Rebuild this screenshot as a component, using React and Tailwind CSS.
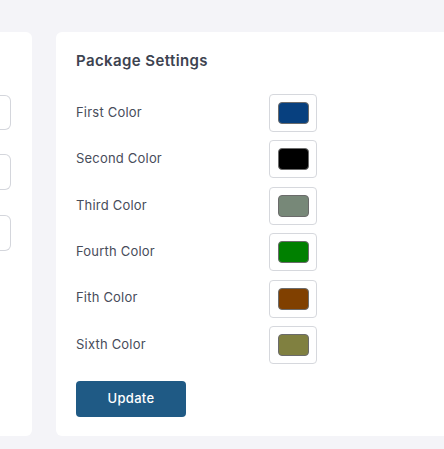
import React from "react";

const colors = [
  { label: "First Color", value: "#07407f" },
  { label: "Second Color", value: "#000000" },
  { label: "Third Color", value: "#778878" },
  { label: "Fourth Color", value: "#008000" },
  { label: "Fith Color", value: "#804000" },
  { label: "Sixth Color", value: "#808040" },
];

function App() {
  return (
    <div
      className="w-[444px] h-[449px] overflow-hidden bg-[#f4f4f8] pt-8"
      style={{ fontFamily: "Inter, 'Open Sans', sans-serif" }}
    >
      <div className="flex gap-6 h-[404px]">
        <div className="w-8 shrink-0 bg-white rounded-r-md pr-[21px] pt-[63px] flex flex-col">
          <div className="h-[35px] border border-[#d4d6dc] border-l-0 rounded-r-md" />
          <div className="h-[36px] mt-[24px] border border-[#d4d6dc] border-l-0 rounded-r-md" />
          <div className="h-[36px] mt-[25px] border border-[#d4d6dc] border-l-0 rounded-r-md" />
        </div>
        <div className="w-[460px] shrink-0 bg-white rounded-md px-5 pt-[19px]">
          <h2 className="text-[15px] font-semibold text-[#3d4350] leading-5 tracking-[0.4px]">Package Settings</h2>
          <div className="mt-[23px] flex flex-col gap-[8.4px]">
            {colors.map((c) => (
              <div key={c.label} className="flex items-center h-[38px]">
                <span className="w-[193px] text-[13px] text-[#474c5a] -mt-px tracking-[0.2px]">{c.label}</span>
                <div className="w-[48px] h-[38px] border border-[#d6d8dd] rounded-[4px] flex items-center justify-center">
                  <div
                    className="w-[31px] h-[22px] rounded-[4px] border border-[#6b6b6b]"
                    style={{ backgroundColor: c.value }}
                  />
                </div>
              </div>
            ))}
          </div>
          <button className="mt-[17px] w-[110px] h-[36px] rounded-[4px] bg-[#1f5a85] text-white text-[13px] font-medium tracking-[0.3px]">
            Update
          </button>
        </div>
      </div>
    </div>
  );
}

export default App;
